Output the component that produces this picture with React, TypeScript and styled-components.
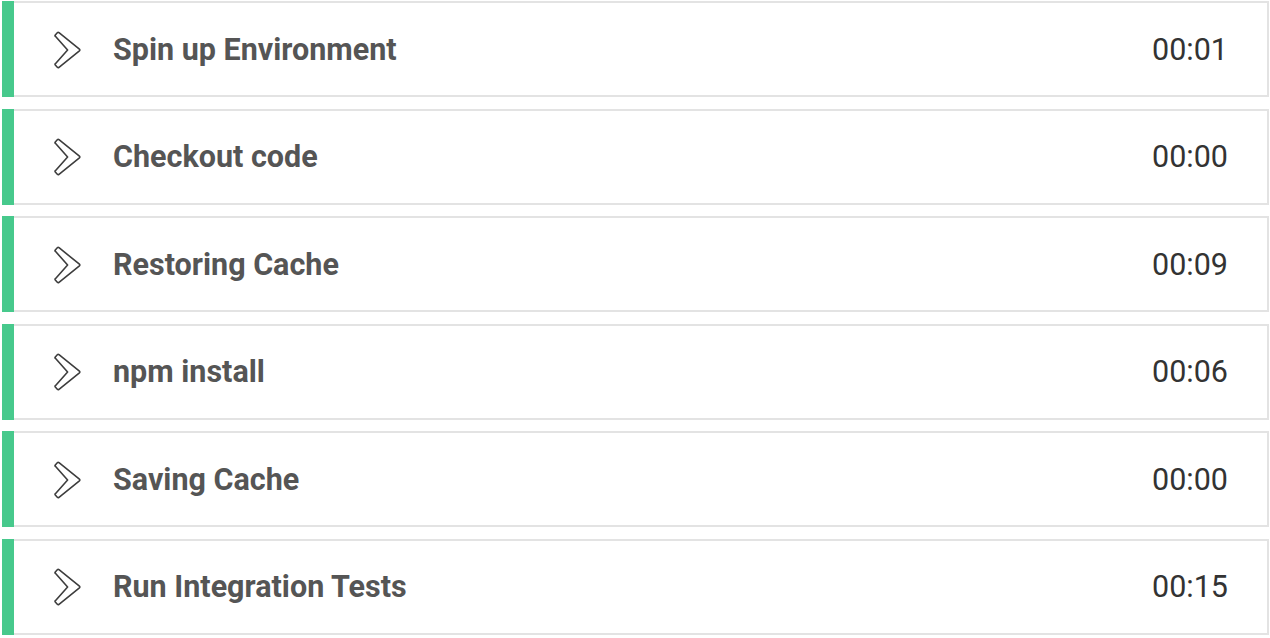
import React from "react";
import styled, { createGlobalStyle } from "styled-components";

const Global = createGlobalStyle`
  html, body { margin: 0; padding: 0; background: #ffffff; }
  body { font-family: Roboto, "Liberation Sans", sans-serif; }
`;

const List = styled.div`
  display: flex;
  flex-direction: column;
  gap: 11.6px;
  padding: 1px 1px 0 2px;
`;

const Row = styled.div`
  display: flex;
  height: 96px;
`;

const Stripe = styled.div<{ $color: string }>`
  width: 12px;
  flex: none;
  background: ${(p) => p.$color};
`;

const Body = styled.div`
  flex: 1;
  display: flex;
  align-items: center;
  border: 2px solid #e3e3e3;
  border-left: none;
  padding: 0 39px 0 40px;
`;

const Icon = styled.svg`
  width: 28px;
  height: 38px;
  flex: none;
  margin-top: 1px;
`;

const Title = styled.span`
  flex: 1;
  margin-left: 31px;
  font-size: 30.5px;
  font-weight: 700;
  color: #555555;
`;

const Time = styled.span`
  font-size: 30.5px;
  font-weight: 400;
  color: #333333;
`;

const Chevron = () => (
  <Icon viewBox="0 0 28 38">
    <path
      d="M5 1.7 L25.4 18.2 Q26.3 19 25.4 19.8 L5 36.3 Q4.1 37 3.3 36.2 L1.3 34 Q0.7 33.3 1.4 32.7 L13.6 19 L1.4 5.3 Q0.7 4.7 1.3 4 L3.3 1.8 Q4.1 1 5 1.7 Z"
      fill="#ffffff"
      stroke="#3d3d3d"
      strokeWidth="1.6"
      strokeLinejoin="round"
    />
  </Icon>
);

const steps = [
  { name: "Spin up Environment", time: "00:01" },
  { name: "Checkout code", time: "00:00" },
  { name: "Restoring Cache", time: "00:09" },
  { name: "npm install", time: "00:06" },
  { name: "Saving Cache", time: "00:00" },
  { name: "Run Integration Tests", time: "00:15" },
];

export default function App() {
  return (
    <>
      <Global />
      <List>
        {steps.map((s) => (
          <Row key={s.name}>
            <Stripe $color="#47c98c" />
            <Body>
              <Chevron />
              <Title>{s.name}</Title>
              <Time>{s.time}</Time>
            </Body>
          </Row>
        ))}
      </List>
    </>
  );
}
